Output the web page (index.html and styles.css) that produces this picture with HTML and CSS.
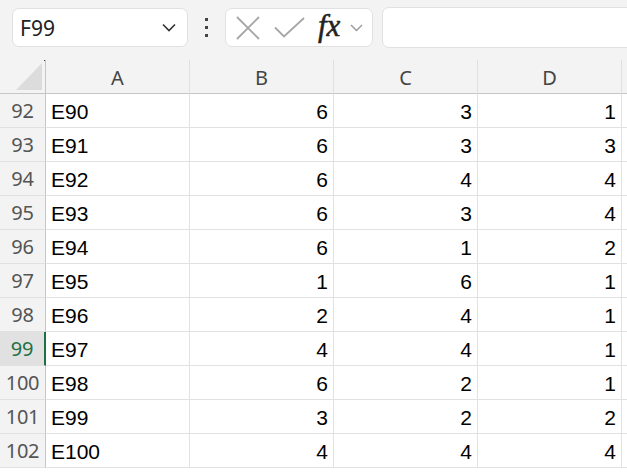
FILE: index.html
```html
<!DOCTYPE html>
<html lang="en">
<head>
    <meta charset="UTF-8">
    <title>Sheet</title>
    <link rel="stylesheet" href="styles.css">
</head>
<body>
    <div class="toolbar">
        <div class="name-box">
            <span class="name-text">F99</span>
            <svg class="chev" width="14" height="9" viewBox="0 0 14 9"><path d="M1 1.5 L7 7.5 L13 1.5" fill="none" stroke="#333" stroke-width="1.6"/></svg>
        </div>
        <div class="dots"><span></span><span></span><span></span></div>
        <div class="fx-box">
            <svg width="24" height="24" viewBox="0 0 24 24"><path d="M1 1 L23 23 M23 1 L1 23" stroke="#a6a6a6" stroke-width="1.8" fill="none"/></svg>
            <svg width="31" height="22" viewBox="0 0 31 22"><path d="M1 10.5 L10 19.5 L30 1" stroke="#a6a6a6" stroke-width="1.8" fill="none"/></svg>
            <span class="fx">fx</span>
            <svg class="chev-small" width="13" height="8" viewBox="0 0 13 8"><path d="M1 1 L6.5 6.5 L12 1" fill="none" stroke="#999" stroke-width="1.4"/></svg>
        </div>
        <div class="formula-input"></div>
    </div>

    <div class="grid">
        <div class="corner"><span class="tri"></span><span class="dot"></span></div>
        <div class="col-head">A</div>
        <div class="col-head">B</div>
        <div class="col-head">C</div>
        <div class="col-head">D</div>
        <div class="col-head"></div>
    </div>
    <div class="grid" id="rows"></div>

    <script>
        const data = [
            [92, 'E90', 6, 3, 1],
            [93, 'E91', 6, 3, 3],
            [94, 'E92', 6, 4, 4],
            [95, 'E93', 6, 3, 4],
            [96, 'E94', 6, 1, 2],
            [97, 'E95', 1, 6, 1],
            [98, 'E96', 2, 4, 1],
            [99, 'E97', 4, 4, 1],
            [100, 'E98', 6, 2, 1],
            [101, 'E99', 3, 2, 2],
            [102, 'E100', 4, 4, 4]
        ];
        const rows = document.getElementById('rows');
        data.forEach(r => {
            let html = '<div class="row-head' + (r[0] === 99 ? ' active' : '') + '">' + r[0] + '</div>';
            html += '<div class="cell">' + r[1] + '</div>';
            html += '<div class="cell num">' + r[2] + '</div>';
            html += '<div class="cell num">' + r[3] + '</div>';
            html += '<div class="cell num">' + r[4] + '</div>';
            html += '<div class="cell"></div>';
            rows.insertAdjacentHTML('beforeend', html);
        });
    </script>
</body>
</html>
```

FILE: styles.css
```css
body {
    margin: 0;
    background-color: #fff;
    font-family: "Liberation Sans", Arial, sans-serif;
    width: 627px;
    overflow: hidden;
}
.toolbar {
    display: flex;
    align-items: center;
    height: 60px;
    padding-left: 12px;
    background-color: #f3f3f3;
    box-sizing: border-box;
    padding-bottom: 5px;
}
.name-box {
    display: flex;
    align-items: center;
    justify-content: space-between;
    width: 176px;
    height: 39px;
    box-sizing: border-box;
    background-color: #fff;
    border: 1px solid #e1e1e1;
    border-radius: 7px;
    padding: 0 11px 0 7px;
}
.name-text {
    font-family: "Noto Sans", "Open Sans", sans-serif;
    font-size: 21px;
    color: #222;
}
.dots {
    display: flex;
    flex-direction: column;
    gap: 5px;
    margin: 0 17px 0 17px;
}
.dots span {
    width: 3px;
    height: 3px;
    background-color: #444;
}
.fx-box {
    display: flex;
    align-items: center;
    width: 148px;
    height: 39px;
    box-sizing: border-box;
    background-color: #fff;
    border: 1px solid #e1e1e1;
    border-radius: 7px;
    padding-left: 10px;
    gap: 14px;
}
.fx {
    font-family: "Liberation Serif", "DejaVu Serif", serif;
    font-style: italic;
    font-size: 31px;
    color: #222;
    margin-left: -1px;
    margin-top: -4px;
    -webkit-text-stroke: 0.5px #222;
}
.chev-small {
    margin-left: -4px;
}
.formula-input {
    flex: 1;
    height: 39px;
    margin-left: 9px;
    margin-right: -20px;
    background-color: #fff;
    border: 1px solid #e1e1e1;
    border-radius: 7px;
}
.grid {
    display: grid;
    grid-template-columns: 46px 144px 144px 144px 144px 1fr;
}
.corner, .col-head {
    height: 34px;
    box-sizing: border-box;
    background-color: #f3f3f3;
    border-bottom: 1px solid #c6c6c6;
}
.corner {
    position: relative;
    border-right: 1px solid #c6c6c6;
}
.tri {
    position: absolute;
    left: 16px;
    top: 3px;
    width: 26px;
    height: 27px;
    background-color: #dcdcdc;
    clip-path: polygon(100% 0, 100% 100%, 0 100%);
}
.dot {
    position: absolute;
    right: 0;
    top: 0;
    width: 1px;
    height: 1px;
    background-color: #333;
}
.col-head {
    display: flex;
    align-items: center;
    justify-content: center;
    padding-top: 2px;
    font-family: "Noto Sans", "Open Sans", sans-serif;
    font-size: 20px;
    color: #444;
    border-right: 1px solid #e1e1e1;
}
.col-head:last-child {
    border-right: none;
}
.row-head {
    display: flex;
    align-items: center;
    justify-content: center;
    height: 34px;
    box-sizing: border-box;
    background-color: #f3f3f3;
    border-right: 1px solid #c6c6c6;
    border-bottom: 1px solid #e1e1e1;
    font-family: "Noto Sans", "Open Sans", sans-serif;
    font-size: 20px;
    color: #555;
    letter-spacing: -0.3px;
}
.row-head.active {
    background-color: #e1e1e1;
    color: #1e7145;
    border-right: 2px solid #1e7145;
}
.cell {
    height: 34px;
    box-sizing: border-box;
    padding: 2px 5px 0 5px;
    line-height: 31px;
    font-size: 21px;
    color: #000;
    border-right: 1px solid #e1e1e1;
    border-bottom: 1px solid #e1e1e1;
}
.cell.num {
    text-align: right;
}
```
